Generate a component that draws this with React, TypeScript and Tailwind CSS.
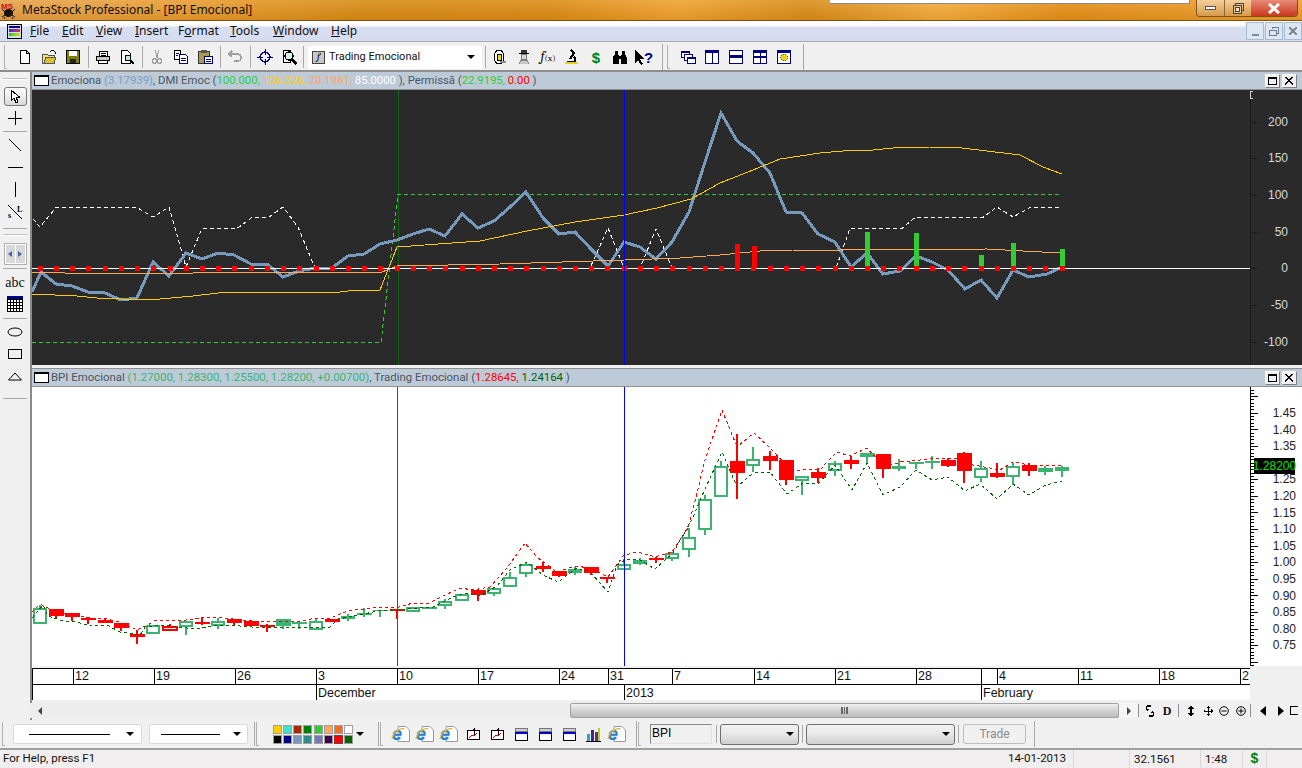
import React from 'react'

const uiFont = 'font-["Noto_Sans",sans-serif]'
const arial = '"Liberation Sans", Arial, sans-serif'

const barX = (i: number) => Math.round(39.8 + 16.22 * i)

const toPoints = (pts: number[][]) => pts.map((p) => p.join(',')).join(' ')

const emociona = [
  [32, 292], [41, 272], [56, 284], [72, 286], [88, 292], [105, 293], [121, 300], [137, 298], [153, 262], [169, 276],
  [186, 253], [202, 259], [218, 253], [234, 255], [251, 264], [267, 264], [283, 277], [299, 271], [315, 268], [332, 268],
  [348, 256], [364, 254], [380, 244], [397, 240], [413, 234], [429, 229], [445, 236], [462, 214], [478, 228], [494, 221],
  [510, 207], [526, 192], [543, 218], [559, 234], [575, 232], [591, 249], [608, 266], [624, 242], [640, 247], [656, 259],
  [672, 242], [689, 212], [705, 162], [721, 113], [737, 141], [753, 153], [770, 173], [786, 212], [802, 213], [818, 234],
  [835, 242], [851, 267], [867, 253], [883, 274], [900, 271], [916, 256], [932, 262], [948, 270], [965, 289], [981, 280],
  [997, 298], [1013, 270], [1029, 277], [1047, 274], [1062, 267],
]

const yellow = [
  [32, 294], [77, 296], [97, 298], [122, 299], [160, 299], [193, 296], [227, 292], [340, 292], [357, 290], [380, 290],
  [397, 247], [480, 241], [527, 231], [575, 222], [624, 215], [657, 208], [691, 199], [720, 183], [753, 170], [780, 159],
  [820, 153], [843, 151], [873, 150], [893, 148], [930, 147], [953, 147], [987, 151], [1020, 155], [1043, 167], [1062, 174],
]

const orange = [
  [32, 272], [65, 273], [193, 273], [194, 272], [382, 272], [397, 266], [500, 264], [624, 260], [680, 258], [720, 255],
  [760, 251], [793, 250], [840, 250], [987, 249], [1023, 251], [1060, 253],
]

const whiteDash = [
  [33, 219], [40, 227], [56, 207.5], [137, 207.5], [153, 217], [169, 207], [186, 267], [202, 228.5], [237, 228.5], [252, 217.5],
  [269, 217], [283, 207], [298, 227], [315, 268], [590, 268], [608, 228], [624, 268], [640, 268], [656, 229], [672, 268],
  [836, 268], [850, 228.5], [902, 228.5], [915, 217.5], [983, 217.5], [997, 207], [1013, 217], [1030, 207.5], [1062, 207.5],
]

const greenDash = [[32, 342.5], [381, 342.5], [398, 194.5], [1062, 194.5]]

const redBars = [[737, 244], [754, 246]]
const greenBars = [[867, 232], [916, 233], [981, 255], [1013, 243], [1062, 249]]

// wick top, wick bottom, body top, body bottom, kind (g hollow green, G solid green, r solid red, R red with white centre)
const candles: [number, number, number, number, string][] = [
  [605, 624, 608, 624, 'g'], [609, 619, 609, 616, 'r'], [613, 621, 613, 617, 'r'], [618, 624, 618, 620, 'r'],
  [618, 623, 620, 623, 'r'], [623, 631, 623, 628, 'r'], [630, 644, 634, 637, 'r'], [625, 634, 625, 634, 'g'],
  [624, 630, 627, 630, 'R'], [621, 635, 621, 627, 'g'], [617, 625, 622, 624, 'r'], [618, 629, 621, 626, 'g'],
  [619, 625, 619, 623, 'r'], [621, 626, 621, 626, 'r'], [624, 632, 625, 627, 'r'], [619, 629, 619, 626, 'G'],
  [622, 629, 622, 624, 'G'], [618, 630, 621, 630, 'g'], [619, 622, 619, 622, 'r'], [614, 621, 616, 618, 'g'],
  [608, 617, 613, 615, 'G'], [610, 617, 610, 611, 'G'], [609, 619, 609, 611, 'r'], [607, 612, 607, 612, 'g'],
  [607, 609, 607, 609, 'G'], [599, 609, 601, 606, 'g'], [594, 601, 594, 601, 'g'], [589, 601, 590, 595, 'r'],
  [588, 596, 588, 594, 'g'], [572, 587, 577, 587, 'g'], [562, 577, 564, 574, 'g'], [562, 572, 566, 569, 'r'],
  [571, 577, 571, 576, 'r'], [567, 575, 569, 573, 'g'], [567, 575, 567, 573, 'r'], [577, 583, 577, 579, 'r'],
  [559, 570, 564, 570, 'g'], [558, 565, 560, 564, 'g'], [557, 563, 558, 560, 'r'], [552, 561, 553, 559, 'g'],
  [528, 557, 537, 550, 'g'], [495, 535, 499, 530, 'g'], [461, 497, 466, 497, 'g'], [434, 499, 461, 473, 'r'],
  [447, 472, 459, 466, 'g'], [451, 470, 456, 461, 'r'], [460, 485, 460, 480, 'r'], [476, 495, 476, 481, 'g'],
  [468, 483, 472, 478, 'r'], [461, 476, 463, 471, 'g'], [456, 469, 460, 464, 'r'], [453, 463, 453, 457, 'G'],
  [454, 478, 454, 469, 'r'], [459, 471, 466, 469, 'g'], [462, 469, 462, 464, 'G'], [456, 469, 461, 463, 'G'],
  [458, 467, 460, 466, 'r'], [452, 483, 453, 471, 'r'], [461, 482, 468, 478, 'g'], [463, 478, 473, 477, 'r'],
  [463, 485, 466, 477, 'g'], [463, 476, 465, 471, 'r'], [466, 475, 468, 472, 'G'], [466, 477, 467, 471, 'g'],
]

const upperBand = [
  [32, 612], [40, 604], [48, 608], [63, 613], [77, 616], [90, 618], [107, 619], [120, 622], [137, 630], [148, 625],
  [155, 620], [186, 620], [202, 618], [218, 617], [240, 620], [263, 622], [283, 621], [299, 622], [315, 618], [331, 618],
  [347, 611], [364, 609], [380, 607], [396, 608], [413, 603], [429, 603], [445, 595], [461, 588], [472, 590], [490, 587],
  [507, 568], [525, 543], [537, 557], [557, 572], [575, 566], [590, 568], [608, 577], [624, 555], [638, 552], [655, 557],
  [672, 552], [688, 528], [696, 497], [705, 460], [722, 410], [735, 442], [738, 446], [754, 433], [770, 448], [793, 472],
  [803, 469], [820, 470], [827, 462], [837, 452], [850, 456], [867, 448], [873, 455], [893, 465], [900, 462], [930, 459],
  [957, 458], [973, 465], [990, 468], [1000, 470], [1013, 462], [1030, 465], [1040, 465], [1063, 466],
]

const lowerBand = [
  [32, 618], [43, 605], [48, 616], [63, 621], [77, 622], [90, 626], [107, 625], [120, 632], [140, 635], [145, 627],
  [163, 625], [177, 627], [197, 629], [217, 625], [240, 626], [263, 628], [297, 627], [330, 627], [338, 619], [360, 615],
  [377, 611], [395, 610], [433, 607], [453, 597], [467, 593], [480, 596], [497, 586], [510, 570], [527, 562], [543, 575],
  [558, 582], [577, 568], [590, 572], [608, 592], [617, 565], [625, 560], [638, 559], [655, 569], [673, 553], [690, 523],
  [693, 518], [700, 500], [722, 452], [737, 487], [753, 473], [770, 472], [787, 494], [803, 483], [818, 484], [835, 465],
  [852, 490], [867, 463], [883, 495], [900, 487], [916, 470], [932, 480], [948, 477], [965, 491], [980, 484], [997, 499],
  [1013, 484], [1029, 495], [1046, 485], [1062, 481],
]

const topLabels: [string, number][] = [['200', 122], ['150', 158], ['100', 195], ['50', 232], ['0', 268], ['-50', 305], ['-100', 342]]
// 1.30 sits behind the last price box, so it is never seen
const priceLabels: [string, number][] = [
  ['1.45', 0], ['1.40', 1], ['1.35', 2], ['1.25', 4], ['1.20', 5], ['1.15', 6], ['1.10', 7], ['1.05', 8],
  ['1.00', 9], ['0.95', 10], ['0.90', 11], ['0.85', 12], ['0.80', 13], ['0.75', 14],
]

const dateCells = [
  { w: 'w-[41px]', t: '' }, { w: 'w-[81px]', t: '12' }, { w: 'w-[81px]', t: '19' }, { w: 'w-[81px]', t: '26' },
  { w: 'w-[81px]', t: '3' }, { w: 'w-[81px]', t: '10' }, { w: 'w-[81px]', t: '17' }, { w: 'w-[49px]', t: '24' },
  { w: 'w-[64px]', t: '31' }, { w: 'w-[82px]', t: '7' }, { w: 'w-[81px]', t: '14' }, { w: 'w-[81px]', t: '21' },
  { w: 'w-[65px]', t: '28' }, { w: 'w-[16px]', t: '' }, { w: 'w-[81px]', t: '4' }, { w: 'w-[81px]', t: '11' },
  { w: 'w-[81px]', t: '18' }, { w: 'w-[10px]', t: '2' },
]

const monthCells = [
  { w: 'w-[284px]', t: '' }, { w: 'w-[308px]', t: 'December' }, { w: 'w-[357px]', t: '2013' }, { w: 'w-[269px]', t: 'February' },
]

const palette = [
  'bg-[#ffcc00]', 'bg-[#40e0d0]', 'bg-[#a52a00]', 'bg-[#008000]', 'bg-[#32cd32]', 'bg-[#ffa858]', 'bg-[#ff6820]', 'bg-white',
  'bg-black', 'bg-[#000080]', 'bg-[#7799bb]', 'bg-[#2e8b8b]', 'bg-[#7777bb]', 'bg-[#400050]', 'bg-[#ff0000]', 'bg-[#006400]',
]

const Ico = ({ children, w = 16, h = 16 }: { children: React.ReactNode; w?: number; h?: number }) => (
  <svg width={w} height={h} viewBox={`0 0 ${w} ${h}`} shapeRendering="crispEdges" fill="none">
    {children}
  </svg>
)

const Btn = ({ children }: { children: React.ReactNode }) => (
  <div className="w-[24px] h-full flex items-center justify-center shrink-0">{children}</div>
)

const Sep = () => (
  <div className="w-[6px] h-full flex items-center justify-center shrink-0">
    <div className="w-px h-[22px] bg-[#a8a8a8]" />
  </div>
)

const Grip = () => <div className="w-[3px] h-[24px] border-l border-b border-[#b0b0b0] shrink-0" />

const HSep = () => (
  <div className="h-[5px] flex items-center justify-center">
    <div className="w-[24px] h-px bg-[#a8a8a8]" />
  </div>
)

const Slot = ({ children }: { children: React.ReactNode }) => (
  <div className="h-[22px] flex items-center justify-center">{children}</div>
)

const Caret = () => <div className="w-0 h-0 border-x-[4px] border-x-transparent border-t-[4px] border-t-black" />

const IeIcon = () => (
  <svg width="20" height="18" viewBox="0 0 20 18" fill="none">
    <path d="M7 1.500h8l3.500 3.500v11.500H7z" fill="#fff" stroke="#9a9a9a" />
    <text x="1" y="14.500" fontSize="18" fontWeight="700" fontStyle="italic" fill="#1c7fd6" fontFamily={arial}>e</text>
    <path d="M1 14C3 7 8 3.500 13 3.500" stroke="#f2b01e" strokeWidth="1.400" />
  </svg>
)

const PaneIcon = () => (
  <Ico>
    <rect x="2" y="2" width="12" height="3" fill="#d0d0d0" stroke="#777" />
    <rect x="2" y="7" width="12" height="7" fill="#fff" stroke="#000" />
    <rect x="2" y="6" width="13" height="2" fill="#0000c0" />
  </Ico>
)

const ChartOneIcon = () => (
  <Ico>
    <path d="M2 4.500h12v9H2z" fill="#fff" stroke="#000" />
    <path d="M4 12l3-3 2 1 3-3" stroke="#e00000" />
    <path d="M9 2v7M8 3h1" stroke="#000" />
  </Ico>
)

const HeaderBox = () => <div className="w-[15px] h-[11px] bg-white border border-black border-t-2 shrink-0" />

const WinBtns = () => (
  <div className="flex gap-[2px] ml-auto pr-[5px]">
    <div className="w-[15px] h-[14px] bg-[#f0f0f0] border border-[#808080] border-t-white border-l-white flex items-center justify-center">
      <div className="w-[9px] h-[8px] border border-black border-t-2" />
    </div>
    <div className="w-[15px] h-[14px] bg-[#f0f0f0] border border-[#808080] border-t-white border-l-white flex items-center justify-center">
      <Ico w={9} h={8}>
        <path d="M0 0l8 7.500M8 0L0 7.500" stroke="#000" strokeWidth="1.400" />
      </Ico>
    </div>
  </div>
)

const TopChart = () => (
  <svg width="1270" height="275" viewBox="32 90 1270 275" shapeRendering="crispEdges" className="block bg-[#2a2a2a]">
    <line x1="398" y1="90" x2="398" y2="365" stroke="#156315" />
    <polyline points={toPoints(whiteDash)} fill="none" stroke="#fff" strokeDasharray="4 3" />
    <polyline points={toPoints(greenDash)} fill="none" stroke="#33cc33" strokeDasharray="4 3" />
    <polyline points={toPoints(emociona)} fill="none" stroke="#7799bb" strokeWidth="3" />
    <polyline points={toPoints(yellow)} fill="none" stroke="#ffcc00" />
    <polyline points={toPoints(orange)} fill="none" stroke="#ffa858" />
    <rect x="32" y="268" width="1218" height="1" fill="#fff" />
    {redBars.map(([x, y]) => (
      <rect key={x} x={x - 2} y={y} width="5" height={268 - y} rx="1" fill="#ff0000" />
    ))}
    {greenBars.map(([x, y]) => (
      <rect key={x} x={x - 2} y={y} width="5" height={268 - y} rx="1" fill="#33cc33" />
    ))}
    {Array.from({ length: 64 }, (_, i) => (
      <circle key={i} cx={barX(i) + 0.5} cy="268.5" r="2.800" fill="#ff0000" />
    ))}
    <line x1="624.5" y1="90" x2="624.5" y2="365" stroke="#0000ff" />
    <path d="M1253 91.500h-2.500v7h2.500" fill="none" stroke="#d0d0d0" />
    <line x1="1250.5" y1="99" x2="1250.5" y2="365" stroke="#1a1a1a" />
    {topLabels.map(([t, y]) => (
      <g key={t}>
        <line x1="1250" y1={y + 0.5} x2="1257" y2={y + 0.5} stroke="#1a1a1a" />
        <text x="1288" y={y + 4} textAnchor="end" fontSize="12" fill="#d8d8d8" fontFamily={arial}>{t}</text>
      </g>
    ))}
  </svg>
)

const BottomChart = () => (
  <svg width="1270" height="279" viewBox="32 387 1270 279" shapeRendering="crispEdges" className="block bg-white">
    {candles.map(([wt, wb, bt, bb, kind], i) => {
      const x = barX(i)
      const green = kind === 'g' || kind === 'G'
      const color = green ? '#3cb371' : '#ff0000'
      return (
        <g key={i}>
          <rect x={x - 1} y={wt} width="2" height={wb - wt} fill={color} />
          {kind === 'g' && <rect x={x - 6} y={bt + 1} width="12" height={Math.max(bb - bt - 2, 1)} fill="#fff" stroke={color} strokeWidth="2" />}
          {kind === 'R' && <rect x={x - 7} y={bt} width="14" height={bb - bt} fill="#fff" stroke={color} strokeWidth="1.500" />}
          {(kind === 'r' || kind === 'G') && <rect x={x - 7} y={bt} width="15" height={bb - bt} fill={color} />}
        </g>
      )
    })}
    <polyline points={toPoints(upperBand)} fill="none" stroke="#ff0000" strokeDasharray="3 3" />
    <polyline points={toPoints(lowerBand)} fill="none" stroke="#006400" strokeDasharray="3 3" />
    <line x1="397.5" y1="387" x2="397.5" y2="666" stroke="#0a7a0a" />
    <line x1="624.5" y1="387" x2="624.5" y2="666" stroke="#0000ff" />
    <line x1="1250.5" y1="387" x2="1250.5" y2="666" stroke="#000" />
    {Array.from({ length: 84 }, (_, i) => {
      const y = Math.round(389.5 + i * 3.32)
      const major = (i - 7) % 5 === 0
      return <line key={i} x1="1250" y1={y + 0.5} x2={major ? 1258 : 1254} y2={y + 0.5} stroke="#000" />
    })}
    {priceLabels.map(([t, i]) => (
      <text key={t} x="1296" y={417 + i * 16.6} textAnchor="end" fontSize="12" fill="#222" fontFamily={arial}>{t}</text>
    ))}
    <rect x="1254" y="458" width="41" height="16" fill="#000" />
    <text x="1274.5" y="470" textAnchor="middle" fontSize="12" fill="#00e600" fontFamily={arial}>1.28200</text>
  </svg>
)

export default function App() {
  return (
    <div className={`w-[1302px] h-[768px] overflow-hidden flex flex-col bg-[#f0f0f0] text-xs text-black ${uiFont}`}>
      {/* title bar */}
      <div className="relative h-[21px] shrink-0 flex items-start border-b border-[#7a5410] bg-[linear-gradient(180deg,rgba(255,255,255,0.12),rgba(120,60,0,0.12)),linear-gradient(90deg,#e6a24a_0%,#e99b2c_15%,#d88a12_28%,#dc8a12_42%,#f0a22e_52%,#d98c18_62%,#f5ac3a_72%,#e48f15_82%,#f0a030_100%)]">
        <svg width="16" height="17" viewBox="0 0 16 17" className="ml-[1px] mt-[2px] shrink-0">
          <ellipse cx="7.500" cy="11" rx="4.500" ry="4" fill="#111" />
          <path d="M1 7l3 3M1 15l3-2M14 7l-3 3M14 15l-3-2M4 15l-1 2M11 15l1 2" stroke="#111" />
          <text x="0" y="7" fontSize="8" fontWeight="700" fill="#c81010" fontFamily={arial}>MS</text>
        </svg>
        <span className="ml-[5px] mt-[2px] text-[#111] text-[12px] leading-[16px]">MetaStock Professional - [BPI Emocional]</span>
        <div className="absolute left-[830px] top-0 w-[360px] h-[4px] bg-white border-b border-[#8a8a8a] border-r" />
        <div className="ml-auto mr-[4px] h-[17px] w-[102px] flex rounded-b-[4px] border border-t-0 border-[#7a5410] overflow-hidden">
          <div className="w-[28px] flex items-center justify-center bg-[linear-gradient(180deg,#f6cf9b,#d59a4c)] border-r border-[#8a6a30]">
            <div className="w-[11px] h-[4px] bg-white border border-[#555]" />
          </div>
          <div className="w-[26px] flex items-center justify-center bg-[linear-gradient(180deg,#f6cf9b,#d59a4c)]">
            <Ico w={12} h={12}>
              <path d="M3.500 3V1h7.500v7H9" stroke="#444" />
              <rect x="1" y="3.500" width="8" height="7.500" fill="#e6c48e" stroke="#444" />
              <rect x="3" y="5.500" width="4" height="3.500" fill="#f5e4c8" stroke="#444" />
            </Ico>
          </div>
          <div className="flex-1 flex items-center justify-center bg-[linear-gradient(180deg,#e98a78,#c9381e)]">
            <svg width="14" height="11" viewBox="0 0 14 11">
              <path d="M2 1l10 9M12 1L2 10" stroke="#fff" strokeWidth="3" />
            </svg>
          </div>
        </div>
      </div>

      {/* menu bar */}
      <div className="h-[21px] shrink-0 flex items-center border-b border-[#a8a8a8] bg-[linear-gradient(180deg,#ffffff_0%,#f8f9fd_25%,#d9dff1_30%,#d6dcef_100%)]">
        <div className="ml-[7px] w-[15px] h-[15px] border border-black bg-[#dcdcdc] flex flex-col p-[1px] gap-px shrink-0">
          <div className="h-[2px] bg-[#000080]" />
          <div className="h-[3px] bg-[linear-gradient(90deg,#3030e0,#e03060)]" />
          <div className="h-[3px] bg-[linear-gradient(90deg,#20c040,#e0e020)]" />
        </div>
        <div className="ml-[8px] flex gap-[14px] text-[12px] leading-[16px] text-[#111]">
          <span className="w-[18px]"><u>F</u>ile</span>
          <span className="w-[20px]"><u>E</u>dit</span>
          <span className="w-[25px]"><u>V</u>iew</span>
          <span className="w-[29px]"><u>I</u>nsert</span>
          <span className="w-[38px]">F<u>o</u>rmat</span>
          <span className="w-[29px]"><u>T</u>ools</span>
          <span className="w-[44px]"><u>W</u>indow</span>
          <span><u>H</u>elp</span>
        </div>
        <div className="ml-auto flex gap-px">
          <div className="w-[18px] h-[18px] border border-[#a6bcd4] bg-[#dfe6f3] flex items-end justify-center pb-[3px]">
            <div className="w-[7px] h-[2px] bg-[#7d8a9a]" />
          </div>
          <div className="w-[18px] h-[18px] border border-[#a6bcd4] bg-[#dfe6f3] flex items-center justify-center">
            <Ico w={10} h={9}>
              <path d="M3 2V.5h6.500V6H7.500" stroke="#6d7c8e" />
              <rect x=".5" y="3" width="6.500" height="5" stroke="#6d7c8e" strokeWidth="1" />
            </Ico>
          </div>
          <div className="w-[18px] h-[18px] border border-[#a6bcd4] bg-[#dfe6f3] flex items-center justify-center">
            <Ico w={8} h={8}>
              <path d="M0 0l8 8M8 0L0 8" stroke="#7d8a9a" strokeWidth="2" />
            </Ico>
          </div>
        </div>
      </div>

      {/* main toolbar */}
      <div className="h-[30px] shrink-0 flex items-center pl-[4px] pt-[2px] border-b-2 border-[#8f8f8f] bg-[#f0f0f0]">
        <Grip />
        <div className="w-[6px] shrink-0" />
        <Btn>
          <Ico>
            <path d="M3.500 1.500h6l3 3v10h-9z" fill="#fff" stroke="#000" />
            <path d="M9.500 1.500v3h3" stroke="#000" />
          </Ico>
        </Btn>
        <Btn>
          <Ico>
            <path d="M1 5h5l1 1h6v8H1z" fill="#f2e46a" stroke="#555" />
            <path d="M3 14l2-6h10l-2 6z" fill="#d8c030" stroke="#555" />
            <path d="M9 3c2-2 4-2 5 0l1 2" stroke="#000" />
          </Ico>
        </Btn>
        <Btn>
          <Ico>
            <rect x="1.500" y="1.500" width="13" height="13" fill="#808000" stroke="#000" />
            <rect x="4" y="2" width="8" height="5" fill="#fff" />
            <rect x="5" y="10" width="6" height="4" fill="#222" />
          </Ico>
        </Btn>
        <Sep />
        <Btn>
          <Ico>
            <path d="M4 7l1-5h7l1 5" fill="#fff" stroke="#000" />
            <rect x="1.500" y="7.500" width="13" height="4" fill="#c8c8c8" stroke="#000" />
            <path d="M3.500 11.500h9v3h-9z" fill="#fff" stroke="#000" />
            <path d="M6 4h5M6 6h5" stroke="#000" />
          </Ico>
        </Btn>
        <Btn>
          <Ico>
            <path d="M2.500 1.500h6l3 3v10h-9z" fill="#fff" stroke="#000" />
            <circle cx="9" cy="9" r="3" fill="#bfe6e6" stroke="#000" />
            <path d="M11 11l4 4" stroke="#000" strokeWidth="2" />
          </Ico>
        </Btn>
        <Sep />
        <Btn>
          <Ico>
            <path d="M6 1l3 8M10 1L7 9" stroke="#9a9a9a" />
            <circle cx="5.500" cy="12" r="2.300" stroke="#9a9a9a" />
            <circle cx="10.500" cy="12" r="2.300" stroke="#9a9a9a" />
          </Ico>
        </Btn>
        <Btn>
          <Ico>
            <path d="M1.500 1.500h6v9h-6z" fill="#fff" stroke="#000" />
            <path d="M6.500 5.500h6l2 2v7h-8z" fill="#fff" stroke="#000080" />
            <path d="M3 4h3M3 6h2M8 9h5M8 11h5" stroke="#000080" />
          </Ico>
        </Btn>
        <Btn>
          <Ico>
            <rect x="1.500" y="2.500" width="11" height="12" fill="#a89a50" stroke="#333" />
            <rect x="4" y="1" width="6" height="3" fill="#555" />
            <rect x="7.500" y="7.500" width="8" height="7" fill="#fff" stroke="#000080" />
            <path d="M9 10h5M9 12h5" stroke="#000080" />
          </Ico>
        </Btn>
        <Sep />
        <Btn>
          <Ico>
            <path d="M2 5h8c3 0 4 2 4 4s-2 3-4 3H7" stroke="#a0a0a0" strokeWidth="1.500" />
            <path d="M5 2L2 5l3 3" stroke="#a0a0a0" strokeWidth="1.500" />
          </Ico>
        </Btn>
        <Sep />
        <Btn>
          <Ico>
            <circle cx="8" cy="8" r="5" stroke="#000080" strokeWidth="1.400" />
            <path d="M8 0v6M8 10v6M0 8h6M10 8h6" stroke="#000080" />
          </Ico>
        </Btn>
        <Btn>
          <Ico>
            <path d="M2.500 1.500h7v12h-7z" fill="#fff" stroke="#000" />
            <circle cx="8" cy="7" r="4" fill="#d6f0f0" stroke="#000" strokeWidth="1.300" />
            <path d="M10.500 10l5 5" stroke="#000" strokeWidth="2.400" />
          </Ico>
        </Btn>
        <div className="w-[1px] ml-[2px] h-[22px] bg-[#a8a8a8] shrink-0" />
        <div className="ml-[4px] w-[174px] h-[23px] bg-white rounded-[2px] flex items-center pl-[4px] pr-[7px] shrink-0">
          <div className="w-[13px] h-[13px] bg-[#c8c8c8] border border-[#444] text-[10px] leading-[11px] italic text-center font-serif">f</div>
          <span className='ml-[4px] text-[11px] text-[#111] font-["Roboto",sans-serif]'>Trading Emocional</span>
          <div className="ml-auto"><Caret /></div>
        </div>
        <Sep />
        <Btn>
          <Ico>
            <ellipse cx="7" cy="8" rx="5" ry="7" fill="#fff" stroke="#000" />
            <rect x="5" y="5" width="4" height="6" fill="#f5d800" stroke="#000" />
            <path d="M8 13h6" stroke="#888" strokeWidth="2" />
          </Ico>
        </Btn>
        <Btn>
          <Ico>
            <path d="M3 4.500h10" stroke="#000" strokeWidth="1.500" />
            <path d="M5 1h6v3H5z" fill="#333" />
            <circle cx="8" cy="8" r="3" fill="#d8d8d8" stroke="#777" />
            <path d="M3 15l2-4h6l2 4" fill="#c8c8c8" stroke="#888" />
          </Ico>
        </Btn>
        <Btn>
          <span className="text-[14px] leading-none italic font-serif text-[#111]">
            f<span className="text-[9px] not-italic">(x)</span>
          </span>
        </Btn>
        <Btn>
          <Ico>
            <path d="M7 1l3 3-4 6" stroke="#000" strokeWidth="2" />
            <path d="M10 8c2 2 2 5-1 6" stroke="#000" strokeWidth="2" />
            <rect x="1" y="13" width="13" height="2" fill="#e8d020" />
            <path d="M3 12h7" stroke="#000" />
          </Ico>
        </Btn>
        <Btn>
          <span className="text-[15px] leading-none font-bold text-[#008000]" style={{ fontFamily: arial }}>$</span>
        </Btn>
        <Btn>
          <Ico>
            <rect x="3" y="2" width="3" height="4" fill="#000" />
            <rect x="10" y="2" width="3" height="4" fill="#000" />
            <path d="M2 6h5v9H1V9zM9 6h5l1 3v6H9z" fill="#000" />
            <rect x="7" y="7" width="2" height="3" fill="#000" />
          </Ico>
        </Btn>
        <Btn>
          <div className="flex items-center">
            <Ico w={9} h={15}>
              <path d="M0 0l9 9H5l3 5-2 1-3-5-3 3z" fill="#000" />
            </Ico>
            <span className="text-[15px] leading-none font-bold text-[#000080]" style={{ fontFamily: arial }}>?</span>
          </div>
        </Btn>
        <div className="w-px ml-[6px] h-[26px] bg-[#a8a8a8] shrink-0" />
        <div className="ml-[4px]"><Grip /></div>
        <div className="w-[6px] shrink-0" />
        <Btn>
          <Ico>
            <rect x="1" y="2" width="8" height="6" fill="#fff" stroke="#000080" />
            <rect x="4" y="5" width="8" height="6" fill="#fff" stroke="#000080" />
            <rect x="7" y="8" width="8" height="6" fill="#fff" stroke="#000080" />
            <path d="M1 3h8M7 9h8" stroke="#000080" strokeWidth="2" />
          </Ico>
        </Btn>
        <Btn>
          <Ico>
            <rect x="1.500" y="1.500" width="13" height="13" fill="#fff" stroke="#000080" />
            <path d="M1 3h14" stroke="#000080" strokeWidth="2" />
            <path d="M8 3v12" stroke="#000080" />
          </Ico>
        </Btn>
        <Btn>
          <Ico>
            <rect x="1.500" y="1.500" width="13" height="13" fill="#fff" stroke="#000080" />
            <path d="M1 7.500h14" stroke="#000080" strokeWidth="3" />
          </Ico>
        </Btn>
        <Btn>
          <Ico>
            <rect x="1.500" y="1.500" width="13" height="13" fill="#fff" stroke="#000080" />
            <path d="M1 3h14M1 8h14" stroke="#000080" strokeWidth="1.500" />
            <path d="M8 2v13" stroke="#000080" />
          </Ico>
        </Btn>
        <Btn>
          <Ico>
            <rect x="1.500" y="1.500" width="13" height="13" fill="#fff" stroke="#000080" />
            <path d="M1 3h14" stroke="#000080" strokeWidth="2" />
            <circle cx="8" cy="8.500" r="3.400" fill="#e8d020" stroke="#7a5000" strokeDasharray="1.400 1" />
          </Ico>
        </Btn>
        <div className="w-px ml-[7px] h-[26px] bg-[#a8a8a8] shrink-0" />
      </div>

      {/* workspace */}
      <div className="flex h-[648px] shrink-0">
        {/* drawing tools */}
        <div className="w-[30px] shrink-0 flex flex-col bg-[#f0f0f0]">
          <div className="h-[13px] flex items-center justify-center">
            <div className="w-[24px] h-[2px] border-y border-t-[#c0c0c0] border-b-white" />
          </div>
          <div className="h-[22px] flex items-center justify-center">
            <div className="w-[23px] h-[19px] rounded-[3px] border border-[#777] bg-[linear-gradient(180deg,#ffffff,#d8d8d8)] flex items-center justify-center">
              <Ico w={10} h={15}>
                <path d="M1 1v11l3-3 2 5 2-1-2-5h3.500z" fill="#fff" stroke="#000" />
              </Ico>
            </div>
          </div>
          <Slot>
            <Ico w={14} h={14}>
              <path d="M7 0v14M0 7h14" stroke="#000" />
            </Ico>
          </Slot>
          <HSep />
          <Slot>
            <Ico w={12} h={12}>
              <path d="M0 0l12 12" stroke="#000" />
            </Ico>
          </Slot>
          <Slot>
            <Ico w={15} h={2}>
              <path d="M0 1h15" stroke="#000" />
            </Ico>
          </Slot>
          <Slot>
            <Ico w={2} h={15}>
              <path d="M1 0v15" stroke="#000" />
            </Ico>
          </Slot>
          <div className="h-[24px] flex items-center justify-center">
            <svg width="15" height="14" viewBox="0 0 15 14" fill="none">
              <path d="M0 0l14 14" stroke="#000" />
              <text x="0" y="13" fontSize="8" fontWeight="700" fill="#000" fontFamily="'Liberation Serif', serif">s</text>
              <text x="9" y="7" fontSize="8" fontWeight="700" fill="#000" fontFamily="'Liberation Serif', serif">L</text>
            </svg>
          </div>
          <div className="h-[6px] flex items-center justify-center mt-[1px]">
            <div className="w-[24px] h-px bg-[#a8a8a8]" />
          </div>
          <div className="h-[7px] flex items-center justify-center">
            <div className="w-[24px] h-[2px] border-y border-t-[#c0c0c0] border-b-white" />
          </div>
          <div className="mt-[5px] mx-auto w-[23px] h-[22px] border border-[#b0b0b0] bg-white p-px flex gap-px">
            <div className="flex-1 bg-[#d8d8d8] flex items-center justify-center">
              <div className="w-0 h-0 border-y-[3px] border-y-transparent border-r-[4px] border-r-[#4a62a8]" />
            </div>
            <div className="flex-1 bg-[#d8d8d8] flex items-center justify-center">
              <div className="w-0 h-0 border-y-[3px] border-y-transparent border-l-[4px] border-l-[#4a62a8]" />
            </div>
          </div>
          <div className="h-[6px] flex items-center justify-center">
            <div className="w-[24px] h-px bg-[#a8a8a8]" />
          </div>
          <div className="h-[21px] mt-[1px] flex items-center justify-center text-[14px] leading-none text-[#111]" style={{ fontFamily: "'Liberation Serif', serif" }}>abc</div>
          <Slot>
            <svg width="16" height="16" viewBox="0 0 16 16" shapeRendering="crispEdges" fill="none">
              <rect x="0" y="0" width="16" height="16" fill="#fff" />
              <rect x="0" y="0" width="16" height="3" fill="#000080" />
              <path d="M.5 3v13M3.500 3v13M6.500 3v13M9.500 3v13M12.500 3v13M15.500 3v13M0 3.500h16M0 6.500h16M0 9.500h16M0 12.500h16M0 15.500h16" stroke="#000" />
            </svg>
          </Slot>
          <div className="h-[6px] flex items-center justify-center">
            <div className="w-[24px] h-px bg-[#a8a8a8]" />
          </div>
          <Slot>
            <svg width="16" height="10" viewBox="0 0 16 10" fill="none">
              <ellipse cx="8" cy="5" rx="7" ry="4" stroke="#000" />
            </svg>
          </Slot>
          <Slot>
            <Ico w={14} h={10}>
              <rect x=".5" y=".5" width="13" height="9" stroke="#000" />
            </Ico>
          </Slot>
          <Slot>
            <svg width="14" height="9" viewBox="0 0 14 9" fill="none">
              <path d="M7 1L.5 8h13z" stroke="#000" />
            </svg>
          </Slot>
          <div className="h-[43px] flex items-start justify-center">
            <div className="w-[24px] h-px bg-[#a8a8a8] mt-[11px]" />
          </div>
        </div>

        {/* panes */}
        <div className="w-[1272px] shrink-0 border-l-2 border-[#8a8a8a] flex flex-col">
          <div className='h-[18px] flex items-center pl-[2px] bg-[#bdcbd9] border-b border-[#8f8f8f] text-[11.3px] text-[#4c5560] whitespace-nowrap font-["Roboto",sans-serif]'>
            <HeaderBox />
            <span className="ml-[2px]">
              Emociona <span className="text-[#7a9cc4]">(3.17939)</span>, DMI Emoc (<span className="text-[#33cc33]">100.000, </span>
              <span className="text-[#ffcc00]">126.226, </span><span className="text-[#ffa858]">20.1961, </span>
              <span className="text-white">85.0000 </span>), Permissã (<span className="text-[#33cc33]">22.9195, </span>
              <span className="text-[#ff0000]">0.00 </span>)
            </span>
            <WinBtns />
          </div>
          <TopChart />
          <div className="h-[4px] bg-[#f0f0f0] border-b border-[#8f8f8f]" />
          <div className='h-[18px] flex items-center pl-[2px] bg-[#bdcbd9] border-b border-[#8f8f8f] text-[11.4px] text-[#4c5560] whitespace-nowrap font-["Roboto",sans-serif]'>
            <HeaderBox />
            <span className="ml-[2px]">
              BPI Emocional <span className="text-[#3cb371]">(1.27000, 1.28300, 1.25500, 1.28200, +0.00700)</span>, Trading Emocional (<span className="text-[#ff0000]">1.28645, </span>
              <span className="text-[#006400]">1.24164 </span>)
            </span>
            <WinBtns />
          </div>
          <BottomChart />

          {/* date axis */}
          <div className="mt-[2px] flex" style={{ fontFamily: arial }}>
            <div className="w-[1218px] shrink-0 bg-white border-t border-black">
              <div className="flex h-[16px] border-b border-black">
                {dateCells.map((c, i) => (
                  <div key={i} className={`${c.w} shrink-0 overflow-hidden border-l border-black pl-[1px] text-[12.5px] leading-[15px] text-[#111]`}>
                    {c.t}
                  </div>
                ))}
              </div>
              <div className="flex h-[15px]">
                {monthCells.map((c, i) => (
                  <div key={i} className={`${c.w} shrink-0 border-l border-black pl-[1px] text-[12.5px] leading-[17px] text-[#111]`}>
                    {c.t}
                  </div>
                ))}
              </div>
            </div>
          </div>

          {/* scroll row */}
          <div className="mt-[3px] h-[15px] flex items-center -ml-[2px]">
            <div className="w-[1108px] h-full flex bg-[#ededed]">
              <div className="w-[16px] ml-[2px] flex items-center justify-center">
                <div className="w-0 h-0 border-y-[4px] border-y-transparent border-r-[4px] border-r-[#444]" />
              </div>
              <div className="w-[522px]" />
              <div className="w-[549px] h-full rounded-[2px] border border-[#a0a0a0] bg-[linear-gradient(180deg,#f0f0f0,#cfcfcf_55%,#bdbdbd)] flex items-center justify-center">
                <div className="w-[7px] h-[7px] border-x-2 border-[#666] flex justify-center">
                  <div className="w-px h-full bg-[#666]" />
                </div>
              </div>
              <div className="flex-1 flex items-center justify-center bg-[#f5f5f5]">
                <div className="w-0 h-0 border-y-[4px] border-y-transparent border-l-[4px] border-l-[#444]" />
              </div>
            </div>
            <div className="w-px h-[13px] bg-[#909090]" />
            <div className="flex items-center text-[#111]">
              <div className="w-[22px] flex justify-center">
                <Ico w={8} h={12}>
                  <path d="M5 1H2.500a2 2 0 0 0-2 2v1M3 11h2.500a2 2 0 0 0 2-2V8" stroke="#000" strokeWidth="1.500" />
                  <path d="M0 4h3L1.500 6zM5 8h3L6.500 6z" fill="#000" />
                </Ico>
              </div>
              <div className="w-[12px] text-center text-[12px] font-bold leading-none" style={{ fontFamily: "'Liberation Serif', serif" }}>D</div>
              <div className="w-px h-[13px] bg-[#909090] ml-[5px]" />
              <div className="w-[23px] flex justify-center">
                <Ico w={8} h={12}>
                  <path d="M4 0l3 4H1zM4 12l3-4H1z" fill="#000" />
                  <path d="M3 4h2v4H3z" fill="#000" />
                </Ico>
              </div>
              <div className="w-[11px] flex justify-center">
                <Ico w={10} h={10}>
                  <path d="M5 0l2 2H3zM5 10l2-2H3zM0 5l2-2v4zM10 5L8 3v4z" fill="#000" />
                  <path d="M5 1v8M1 5h8" stroke="#000" />
                </Ico>
              </div>
              <div className="w-[17px] ml-[2px] flex justify-center">
                <svg width="10" height="10" viewBox="0 0 10 10" fill="none">
                  <circle cx="5" cy="5" r="4.300" stroke="#000" />
                  <path d="M2.500 5h5" stroke="#000" />
                </svg>
              </div>
              <div className="w-[18px] flex justify-center">
                <svg width="10" height="10" viewBox="0 0 10 10" fill="none">
                  <circle cx="5" cy="5" r="4.300" stroke="#000" />
                  <path d="M2.500 5h5M5 2.500v5" stroke="#000" />
                </svg>
              </div>
              <div className="w-px h-[13px] bg-[#909090]" />
              <div className="w-[24px] flex justify-center">
                <div className="w-0 h-0 border-y-[5px] border-y-transparent border-r-[6px] border-r-black" />
              </div>
              <div className="w-[12px] flex justify-center">
                <div className="w-0 h-0 border-y-[5px] border-y-transparent border-l-[6px] border-l-black" />
              </div>
              <div className="w-[8px] h-[9px] ml-[3px] border border-black border-r-0" />
            </div>
          </div>
        </div>
      </div>

      {/* bottom toolbar */}
      <div className="h-[30px] shrink-0 flex items-center border-b-2 border-[#a0a0a0] bg-[#f0f0f0] pl-[2px]">
        <Grip />
        <div className="ml-[8px] w-[129px] h-[20px] bg-white rounded-[2px] border border-[#d8d8d8] flex items-center pl-[15px] pr-[7px] shrink-0">
          <div className="w-[81px] h-px bg-black" />
          <div className="ml-auto"><Caret /></div>
        </div>
        <div className="ml-[7px] w-[99px] h-[20px] bg-white rounded-[2px] border border-[#d8d8d8] flex items-center pl-[11px] pr-[6px] shrink-0">
          <div className="w-[59px] h-px bg-black" />
          <div className="ml-auto"><Caret /></div>
        </div>
        <div className="ml-[6px] w-px h-[24px] bg-[#a8a8a8] shrink-0" />
        <div className="ml-[1px]"><Grip /></div>
        <div className="ml-[14px] grid grid-cols-8 gap-px w-[80px] shrink-0">
          {palette.map((c, i) => (
            <div key={i} className={`w-[9px] h-[9px] ${c} border ${i === 14 ? 'border-dotted border-[#555]' : 'border-[#a0a0a0]'}`} />
          ))}
        </div>
        <div className="ml-[3px]"><Caret /></div>
        <div className="ml-[14px] w-px h-[24px] bg-[#a8a8a8] shrink-0" />
        <div className="ml-[1px]"><Grip /></div>
        <div className="ml-[6px] flex items-center">
          <Btn><IeIcon /></Btn>
          <Btn><IeIcon /></Btn>
          <Btn><IeIcon /></Btn>
          <Btn><ChartOneIcon /></Btn>
          <Btn><ChartOneIcon /></Btn>
          <Btn><PaneIcon /></Btn>
          <Btn><PaneIcon /></Btn>
          <Btn><PaneIcon /></Btn>
          <Btn>
            <Ico>
              <path d="M1 15.500h15" stroke="#000" />
              <rect x="2" y="8" width="3" height="7" fill="#2f9fd8" />
              <rect x="6" y="4" width="3" height="11" fill="#3a2a8c" />
              <rect x="10" y="6" width="3" height="9" fill="#6a2a8a" />
              <rect x="13" y="2" width="2" height="13" fill="#b8d020" />
            </Ico>
          </Btn>
          <Btn><IeIcon /></Btn>
        </div>
        <div className="ml-[7px] w-px h-[26px] bg-[#a8a8a8] shrink-0" />
        <div className="ml-[1px]"><Grip /></div>
        <div className="ml-[9px] w-[62px] h-[20px] border border-[#888] border-r-[#e0e0e0] border-b-[#e0e0e0] bg-[#f0f0f0] pl-[1px] text-[12px] leading-[17px] shrink-0" style={{ fontFamily: arial }}>BPI</div>
        <div className="ml-[4px] w-px h-[18px] bg-[#a8a8a8] shrink-0" />
        <div className="ml-[3px] w-[79px] h-[21px] rounded-[3px] border border-[#707070] bg-[linear-gradient(180deg,#f2f2f2,#e8e8e8_45%,#d0d0d0)] flex items-center justify-end pr-[4px] shrink-0">
          <Caret />
        </div>
        <div className="ml-[3px] w-px h-[18px] bg-[#a8a8a8] shrink-0" />
        <div className="ml-[3px] w-[149px] h-[21px] rounded-[3px] border border-[#707070] bg-[linear-gradient(180deg,#f2f2f2,#e8e8e8_45%,#d0d0d0)] flex items-center justify-end pr-[4px] shrink-0">
          <Caret />
        </div>
        <div className="ml-[3px] w-px h-[18px] bg-[#a8a8a8] shrink-0" />
        <div className='ml-[4px] w-[63px] h-[20px] rounded-[3px] border border-[#bdbdbd] flex items-center justify-center text-[12px] text-[#8a8a8a] shrink-0 font-["Roboto",sans-serif]'>Trade</div>
        <div className="ml-[8px] w-px h-[26px] bg-[#a8a8a8] shrink-0" />
      </div>

      {/* status bar */}
      <div className='flex-1 flex items-center bg-[#f0eeee] text-[11.5px] text-[#111] font-["Roboto",sans-serif]'>
        <div className="w-[1073px] flex justify-between pl-[3px] pr-[7px]">
          <span>For Help, press F1</span>
          <span>14-01-2013</span>
        </div>
        <div className="w-[56px] h-full border-l border-[#d8d8d8]" />
        <div className="w-[71px] h-full border-l border-[#d8d8d8] pl-[4px] leading-[18px]">32.1561</div>
        <div className="w-[42px] h-full border-l border-[#d8d8d8] pl-[4px] leading-[18px]">1:48</div>
        <div className="w-[24px] h-full border-l border-[#d8d8d8] text-center text-[14px] font-bold leading-[16px] text-[#008000]" style={{ fontFamily: arial }}>$</div>
        <div className="flex-1 h-full border-l border-[#d8d8d8]" />
      </div>
    </div>
  )
}
